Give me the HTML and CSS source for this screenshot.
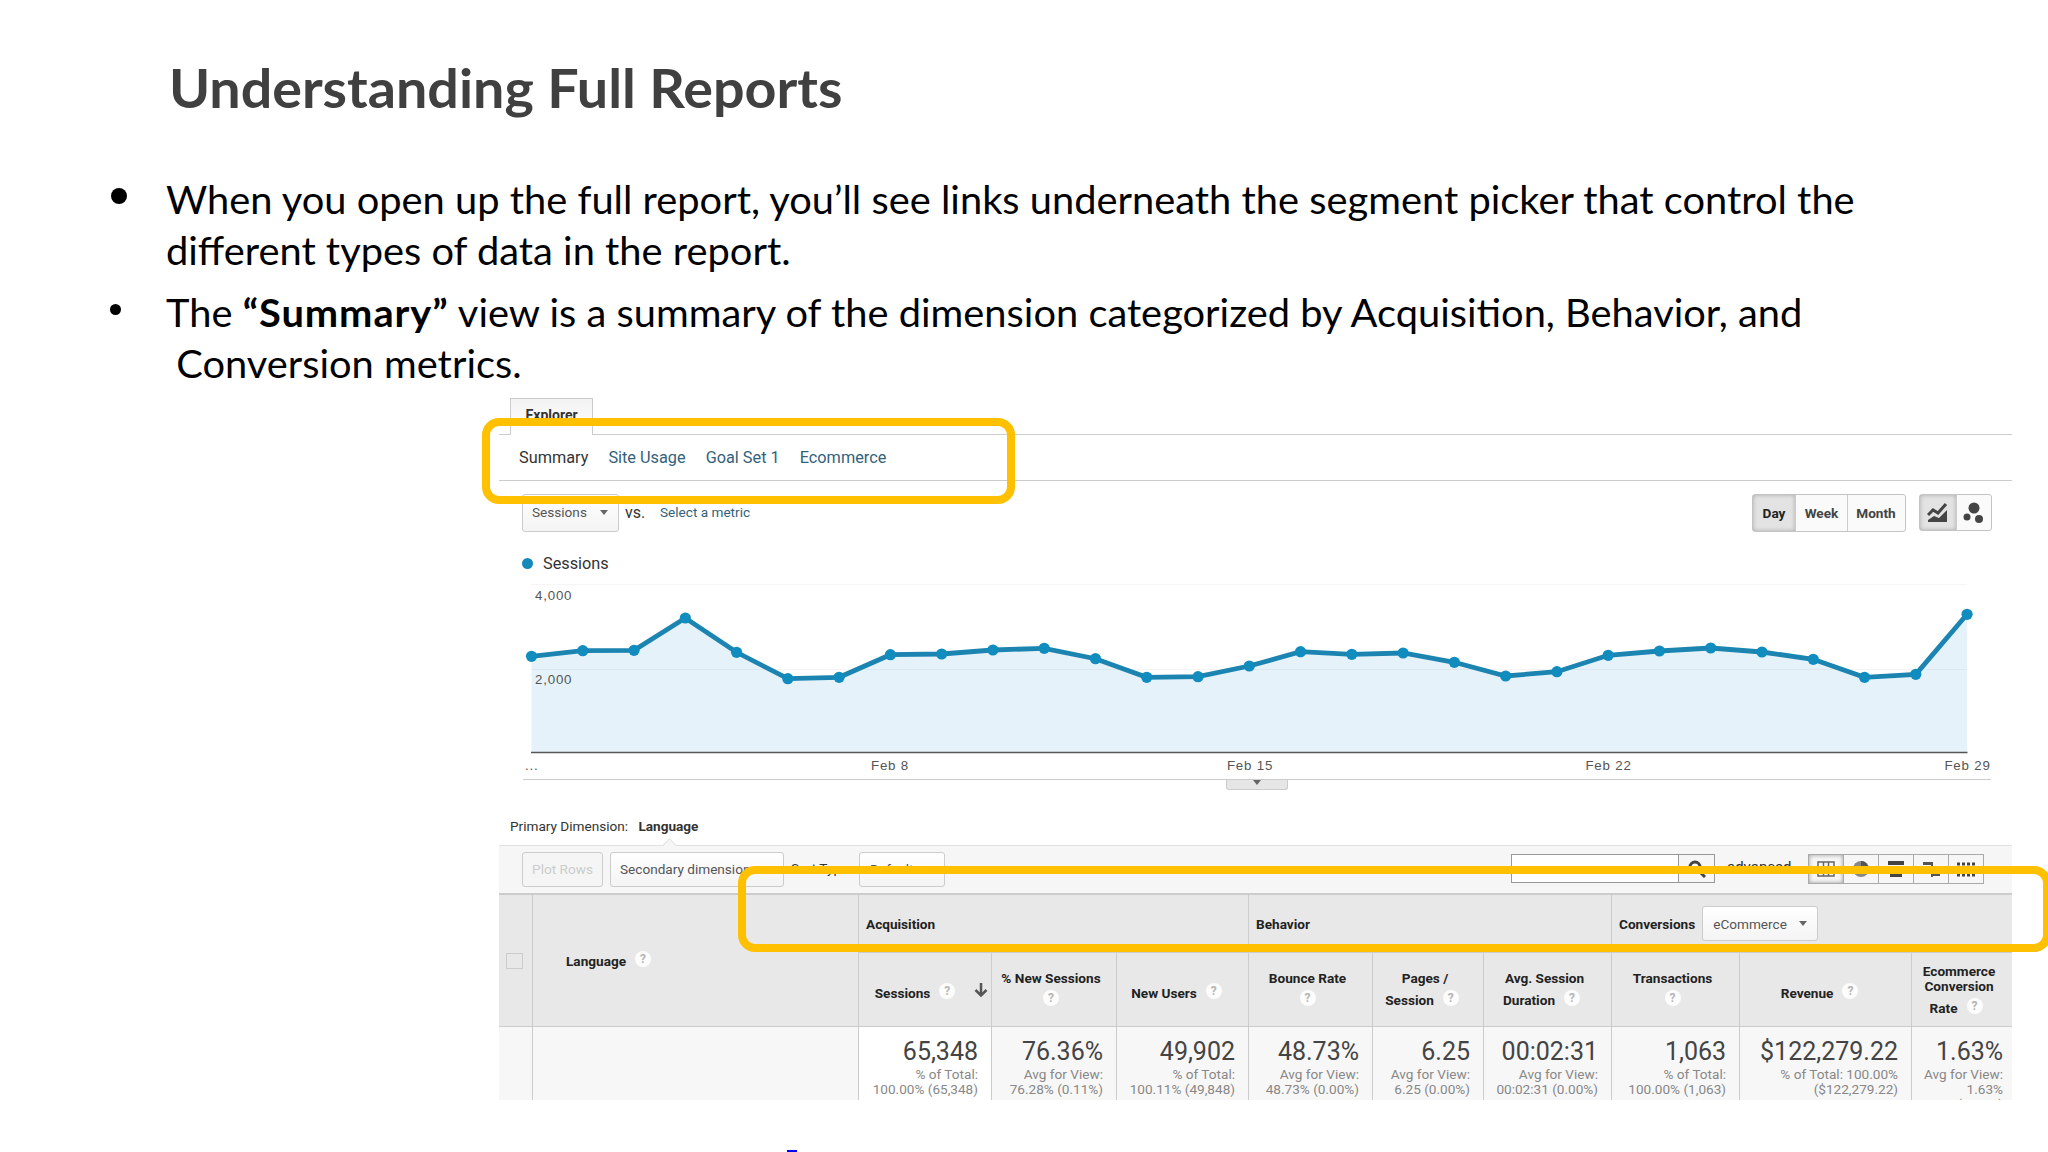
FILE: index.html
```html
<!DOCTYPE html>
<html lang="en">
  <head>
    <meta charset="UTF-8" />
    <meta name="viewport" content="width=device-width, initial-scale=1.0" />
    <title>Understanding Full Reports</title>
    <link rel="stylesheet" href="styles.css">
  </head>
  <body>
    <main class="slide">
      <h1>Understanding Full Reports</h1>
      <ul class="points">
        <li class="big-dot">
          <p>
            When you open up the full report, you’ll see links underneath the segment picker that control the<br />
            different types of data in the report.
          </p>
        </li>
        <li>
          <p>
            The <b>“Summary”</b> view is a summary of the dimension categorized by Acquisition, Behavior, and<br />
            &nbsp;Conversion metrics.
          </p>
        </li>
      </ul>

      <section class="report">
        <div class="tabs"><div class="tab">Explorer</div></div>
        <nav class="views">
          <span>Summary</span>
          <a>Site Usage</a>
          <a>Goal Set 1</a>
          <a>Ecommerce</a>
        </nav>

        <div class="controls">
          <div class="select metric">Sessions <i class="caret"></i></div>
          <span class="vs">vs.</span>
          <a>Select a metric</a>
          <div class="group range">
            <b class="on">Day</b><b>Week</b><b>Month</b>
          </div>
          <div class="group kind">
            <b class="on">
              <svg width="21" height="21" viewBox="0 0 21 21">
                <path d="M1 13l5-5 5 3 8-9" fill="none" stroke="#444" stroke-width="3" />
                <path d="M1 20v-2l6-4 5 2 8-8v12z" fill="#444" />
              </svg>
            </b>
            <b>
              <svg width="21" height="21" viewBox="0 0 21 21">
                <g fill="#444">
                  <circle cx="11" cy="6" r="5.5" />
                  <circle cx="4" cy="15" r="3.5" />
                  <circle cx="16" cy="17" r="4" />
                </g>
              </svg>
            </b>
          </div>
        </div>

        <div class="legend"><i></i>Sessions</div>
        <svg class="chart" width="1513" height="204" viewBox="499 576 1513 204">
          <path class="grid" d="M531 584.5H1967" />
          <path class="area" id="area" />
          <path class="grid" d="M531 669.5H1967" />
          <path class="axis" d="M531 752.5H1967.5" />
          <path class="line" id="line" />
          <g id="dots"></g>
          <text x="535" y="599.5">4,000</text>
          <text x="535" y="684">2,000</text>
          <text x="525" y="770">...</text>
          <text class="mid" x="890" y="770">Feb 8</text>
          <text class="mid" x="1250" y="770">Feb 15</text>
          <text class="mid" x="1608.5" y="770">Feb 22</text>
          <text class="mid" x="1967.5" y="770">Feb 29</text>
          <path class="rule" d="M523 779.5H1991" />
        </svg>
        <div class="handle"><i class="caret"></i></div>

        <div class="dimension">Primary Dimension: <b>Language</b></div>

        <div class="toolbar">
          <div class="select plot">Plot Rows</div>
          <div class="select second">Secondary dimension <i class="caret"></i></div>
          <span class="sort">Sort Type:</span>
          <div class="select default">Default <i class="caret"></i></div>
          <div class="search">
            <i class="field"></i>
            <i class="go">
              <svg width="18" height="18" viewBox="0 0 18 18" fill="none" stroke="#444" stroke-width="3">
                <circle cx="7" cy="7" r="5" />
                <path d="M11 11l6 6" />
              </svg>
            </i>
          </div>
          <span class="advanced">advanced</span>
          <div class="types">
            <i class="on">
              <svg width="18" height="18" viewBox="0 0 18 18" fill="none" stroke="#666" stroke-width="1.5">
                <path d="M1 2h16v14H1zM1 7h16M1 12h16M6.500 2v14M11.500 2v14" />
              </svg>
            </i>
            <i>
              <svg width="18" height="18" viewBox="0 0 18 18">
                <circle cx="9" cy="9" r="8" fill="#888" />
                <path d="M9 9V1a8 8 0 0 1 6 13z" fill="#555" />
              </svg>
            </i>
            <i>
              <svg width="18" height="18" viewBox="0 0 18 18" fill="#444">
                <path d="M1 1h16v4H1zM3 7h13v4H3zM3 13h12v4H3z" />
              </svg>
            </i>
            <i>
              <svg width="18" height="18" viewBox="0 0 18 18" fill="#555">
                <path d="M1 2h9v3H1zM9 2h2v15H9zM5 7h5v3H5zM10 10h5v2h-5zM10 13h8v3h-8z" />
              </svg>
            </i>
            <i>
              <svg width="20" height="18" viewBox="0 0 20 18" fill="none" stroke="#444" stroke-width="3">
                <path stroke-dasharray="3 2" d="M1 4h19M1 15h19M1 9h19" />
              </svg>
            </i>
          </div>
        </div>

        <table>
          <colgroup>
            <col class="c33" /><col class="c326" /><col class="c133" /><col class="c125" />
            <col class="c132" /><col class="c124" /><col class="c111" /><col class="c128" />
            <col class="c128" /><col class="c172" /><col class="c101" />
          </colgroup>
          <thead>
            <tr class="groups">
              <th rowspan="2"><i class="check"></i></th>
              <th rowspan="2" class="lang"><div class="line help">Language<i>?</i></div></th>
              <th colspan="3">Acquisition</th>
              <th colspan="3">Behavior</th>
              <th colspan="3">
                <div class="conv">
                  Conversions
                  <div class="select ecom">eCommerce <i class="caret"></i></div>
                </div>
              </th>
            </tr>
            <tr class="metrics">
              <th>
                <div class="line help sorted">Sessions<i>?</i>
                  <svg width="14" height="16" viewBox="0 0 14 16" fill="none" stroke="#555" stroke-width="2.500">
                    <path d="M7 1v12M1.500 8L7 13.500 12.500 8" />
                  </svg>
                </div>
              </th>
              <th><div class="line">% New Sessions</div><div class="line help alone"><i>?</i></div></th>
              <th><div class="line help">New Users<i>?</i></div></th>
              <th><div class="line">Bounce Rate</div><div class="line help alone"><i>?</i></div></th>
              <th><div class="line">Pages /</div><div class="line help">Session<i>?</i></div></th>
              <th><div class="line">Avg. Session</div><div class="line help">Duration<i>?</i></div></th>
              <th><div class="line">Transactions</div><div class="line help alone"><i>?</i></div></th>
              <th><div class="line help">Revenue<i>?</i></div></th>
              <th><div class="line">Ecommerce</div><div class="line">Conversion</div><div class="line help">Rate<i>?</i></div></th>
            </tr>
          </thead>
          <tbody>
            <tr>
              <td></td>
              <td></td>
              <td class="sorted"><div class="cell"><strong>65,348</strong>% of Total:<br />100.00% (65,348)</div></td>
              <td><div class="cell"><strong>76.36%</strong>Avg for View:<br />76.28% (0.11%)</div></td>
              <td><div class="cell"><strong>49,902</strong>% of Total:<br />100.11% (49,848)</div></td>
              <td><div class="cell"><strong>48.73%</strong>Avg for View:<br />48.73% (0.00%)</div></td>
              <td><div class="cell"><strong>6.25</strong>Avg for View:<br />6.25 (0.00%)</div></td>
              <td><div class="cell"><strong>00:02:31</strong>Avg for View:<br />00:02:31 (0.00%)</div></td>
              <td><div class="cell"><strong>1,063</strong>% of Total:<br />100.00% (1,063)</div></td>
              <td><div class="cell"><strong>$122,279.22</strong>% of Total: 100.00%<br />($122,279.22)</div></td>
              <td class="last"><div class="cell"><strong>1.63%</strong>Avg for View:<br />1.63%<br />(0.00%)</div></td>
            </tr>
          </tbody>
        </table>
      </section>

      <div class="mark mark-views"></div>
      <div class="mark mark-groups"></div>
      <div class="footer-link"></div>
    </main>

    <script>
      // y position of each day of February
      const days = [
        656.3, 650.7, 650.3, 618, 652.3, 678.7, 677.3, 654.7, 654, 650,
        648.3, 658.7, 677.3, 676.7, 666, 651.7, 654.3, 653, 662.3, 676,
        671.7, 655.3, 651, 648, 652, 659.3, 677.3, 674.3, 614.3,
      ];
      const points = days.map((y, i) => [531.5 + i * 51.27, y]);
      const path = "M" + points.map((p) => p.join(" ")).join("L");

      document.querySelector("#line").setAttribute("d", path);
      document.querySelector("#area").setAttribute("d", path + "V752H531.5Z");
      document.querySelector("#dots").innerHTML = points
        .map(([x, y]) => `<circle cx="${x}" cy="${y}" r="5.6" />`)
        .join("");
    </script>
  </body>
</html>
```
FILE: styles.css
```css
* {
  box-sizing: border-box;
}

body {
  margin: 0;
  background: #fff;
}

.slide {
  position: relative;
  width: 2048px;
  height: 1152px;
  overflow: hidden;
  font-family: Lato, sans-serif;
}

h1 {
  margin: 0;
  padding: 55px 0 0 164px;
  height: 174px;
  font-size: 54px;
  line-height: 66px;
  color: #404040;
  transform: scaleX(1.03);
  transform-origin: 0 0;
}

.points {
  height: 224px;
  margin: 0;
  padding: 0 0 0 166px;
  list-style: none;
  font-size: 38px;
  line-height: 51px;
  white-space: nowrap;
}

.points li {
  position: relative;
  margin-bottom: 11px;
}

.points li::before {
  content: "";
  position: absolute;
  left: -56px;
  top: 17px;
  width: 11px;
  height: 11px;
  border-radius: 50%;
  background: #000;
}

.points .big-dot::before {
  top: 14px;
  left: -55px;
  width: 16px;
  height: 16px;
}

.points p {
  margin: 0;
  transform: scaleX(1.048);
  transform-origin: 0 0;
}

.points b {
  letter-spacing: 0.9px;
}

.report {
  width: 1513px;
  height: 702px;
  margin-left: 499px;
  overflow: hidden;
  font-family: Roboto, sans-serif;
  font-size: 13.6px;
  color: #333;
}

.report i {
  font-style: normal;
}

.report a {
  color: #33627a;
}

.tabs {
  height: 37px;
  padding-left: 11px;
  border-bottom: 1.5px solid #ccc;
}

.tab {
  width: 83px;
  height: 37px;
  padding-top: 8px;
  border: 1.5px solid #ccc;
  border-bottom: 0;
  background: linear-gradient(#f3f3f3, #fff);
  font-size: 14px;
  font-weight: 700;
  line-height: 16px;
  text-align: center;
}

.views {
  display: flex;
  gap: 20px;
  height: 46px;
  padding: 13px 0 0 20px;
  border-bottom: 1.5px solid #ccc;
  font-size: 16.3px;
  line-height: 20px;
}

.controls {
  display: flex;
  height: 68px;
  padding: 13px 20px 0 23px;
  line-height: 37px;
}

.select {
  display: flex;
  align-items: center;
  justify-content: space-between;
  border: 1px solid #ccc;
  border-radius: 3px;
  background: linear-gradient(#fff, #f4f4f4);
  color: #555;
}

.caret {
  border: 4px solid transparent;
  border-top: 5px solid #666;
  border-bottom: 0;
}

.metric {
  width: 97px;
  height: 38px;
  padding: 0 10px 1px 9px;
}

.vs {
  width: 41px;
  padding-left: 6px;
  font-size: 16px;
}

.group {
  display: flex;
  height: 38px;
  border: 1.5px solid #c4c4c4;
  border-radius: 3px;
  background: #fafafa;
  color: #444;
}

.group b {
  display: flex;
  align-items: center;
  justify-content: center;
  width: 36px;
}

.group b + b {
  border-left: 1px solid #ccc;
}

.group .on {
  background: #e3e3e3;
  box-shadow: inset 0 0 4px #aaa;
  color: #222;
}

.range {
  width: 154px;
  margin-left: auto;
}

.range b {
  width: 42px;
}

.range b:nth-child(2) {
  width: 52px;
}

.range b:nth-child(3) {
  width: 57px;
}

.kind {
  width: 73px;
  height: 37px;
  margin-left: 13px;
}

.legend {
  display: flex;
  align-items: center;
  height: 27px;
  padding: 1px 0 0 23px;
  font-size: 16.3px;
}

.legend i {
  width: 11px;
  height: 11px;
  margin-right: 10px;
  border-radius: 50%;
  background: #158ab8;
}

.chart {
  display: block;
}

.chart text {
  font-family: "Liberation Sans", sans-serif;
  font-size: 13.3px;
  letter-spacing: 0.8px;
  fill: #555;
}

.chart .mid {
  text-anchor: middle;
}

.chart .grid {
  stroke: #000;
  stroke-opacity: 0.04;
}

.chart .area {
  fill: #e5f2f9;
}

.chart .axis {
  stroke: #555;
  stroke-width: 1.6;
}

.chart .rule {
  stroke: #ccc;
}

.chart .line {
  fill: none;
  stroke: #1b84b1;
  stroke-width: 4.8;
}

.chart circle {
  fill: #108cbf;
}

.handle {
  display: flex;
  justify-content: center;
  width: 62px;
  height: 10px;
  margin-left: 727px;
  border: 1px solid #ccc;
  border-top: 0;
  border-radius: 0 0 3px 3px;
  background: #e6e6e6;
}

.dimension {
  position: relative;
  height: 55px;
  padding: 27px 0 0 11px;
  line-height: 18px;
}

.dimension b {
  margin-left: 7px;
}

/* small notch that ties the selected dimension to the toolbar */
.dimension::after {
  content: "";
  position: absolute;
  left: 166px;
  bottom: -4px;
  width: 8px;
  height: 8px;
  border: 1px solid #e2e2e2;
  border-width: 1px 0 0 1px;
  background: #f6f6f6;
  transform: rotate(45deg);
}

.toolbar {
  display: flex;
  height: 48px;
  padding: 6px 28px 0 23px;
  border-top: 1px solid #e2e2e2;
  background: #f6f6f6;
}

.toolbar .select {
  height: 35px;
  padding-bottom: 1px;
}

.plot {
  width: 81px;
  justify-content: center;
  background: #f5f5f5;
  color: #ccc;
}

.second {
  width: 174px;
  margin-left: 7px;
  padding: 0 10px 0 9px;
}

.sort {
  width: 75px;
  padding-left: 7px;
  line-height: 33px;
}

.default {
  width: 86px;
  padding: 0 10px;
}

.search {
  display: flex;
  width: 204px;
  height: 29px;
  margin: 2px 0 0 auto;
  border: 1.5px solid #999;
}

.field {
  width: 167px;
  background: #fff;
  border-right: 1px solid #999;
}

.go {
  display: flex;
  flex: 1;
  align-items: center;
  justify-content: center;
}

.advanced {
  width: 93px;
  padding-left: 12px;
  line-height: 30px;
  font-size: 15px;
}

.types {
  display: flex;
  width: 176px;
  height: 30px;
  margin-top: 2px;
  border: 1.5px solid #aaa;
}

.types i {
  display: flex;
  flex: 1;
  align-items: center;
  justify-content: center;
}

.types i + i {
  border-left: 1px solid #aaa;
}

.types .on {
  box-shadow: inset 0 0 4px #999;
}

table {
  width: 1513px;
  table-layout: fixed;
  border-spacing: 0;
}

.c33 { width: 33px; }
.c326 { width: 326px; }
.c133 { width: 133px; }
.c125 { width: 125px; }
.c132 { width: 132px; }
.c124 { width: 124px; }
.c111 { width: 111px; }
.c128 { width: 128px; }
.c172 { width: 172px; }
.c101 { width: 101px; }

th,
td {
  padding: 0;
  border-left: 1.5px solid #ccc;
}

th:first-child,
td:first-child {
  border-left: 0;
}

.metrics th:first-child {
  border-left: 1.5px solid #ccc;
}

th {
  background: #e8e8e8;
  border-bottom: 1.5px solid #ccc;
  color: #222;
}

.groups th {
  height: 60px;
  padding-left: 7px;
  border-top: 2px solid #ccc;
  text-align: left;
}

.metrics th {
  height: 74px;
  padding-right: 6px;
}

.check {
  display: block;
  width: 17px;
  height: 16px;
  border: 1.5px solid #ccc;
}

.groups .lang {
  padding: 0 0 6px 33px;
}

.lang .line {
  justify-content: flex-start;
}

.conv {
  display: flex;
  align-items: center;
  gap: 7px;
}

.ecom {
  width: 116px;
  height: 35px;
  padding: 0 10px;
  font-weight: 400;
}

.line {
  display: flex;
  justify-content: center;
  height: 15px;
  line-height: 14px;
  white-space: nowrap;
}

.help {
  height: 22px;
  line-height: 28px;
}

.line i {
  width: 16px;
  height: 16px;
  margin: 4px 6px 0 9px;
  border-radius: 50%;
  background: #fcfcfc;
  font-size: 12px;
  line-height: 16px;
  text-align: center;
  color: #b4b4b4;
}

.alone i {
  margin-left: 6px;
}

.sorted i {
  margin-right: 0;
}

.sorted svg {
  margin: 3px -19px 0 19px;
}

td {
  height: 74px;
  background: #f7f7f7;
  vertical-align: top;
}

td.sorted {
  background: #fff;
}

.cell {
  height: 73px;
  padding: 15px 13px 0 0;
  overflow: hidden;
  line-height: 15px;
  text-align: right;
  white-space: nowrap;
  color: #888;
}

.last .cell {
  padding-right: 9px;
}

.cell strong {
  display: block;
  margin-bottom: 6px;
  font-size: 25px;
  font-weight: 400;
  line-height: 19px;
  color: #444;
}

/* highlight frames drawn over the report */
.mark {
  position: absolute;
  border: 8.5px solid #ffc000;
  border-radius: 17px;
}

.mark-views {
  left: 482px;
  top: 418px;
  width: 533px;
  height: 86px;
}

.mark-groups {
  left: 738px;
  top: 866px;
  width: 1313px;
  height: 86px;
}

.footer-link {
  position: absolute;
  left: 787px;
  bottom: 0;
  width: 10px;
  height: 2px;
  background: #00f;
}
```
